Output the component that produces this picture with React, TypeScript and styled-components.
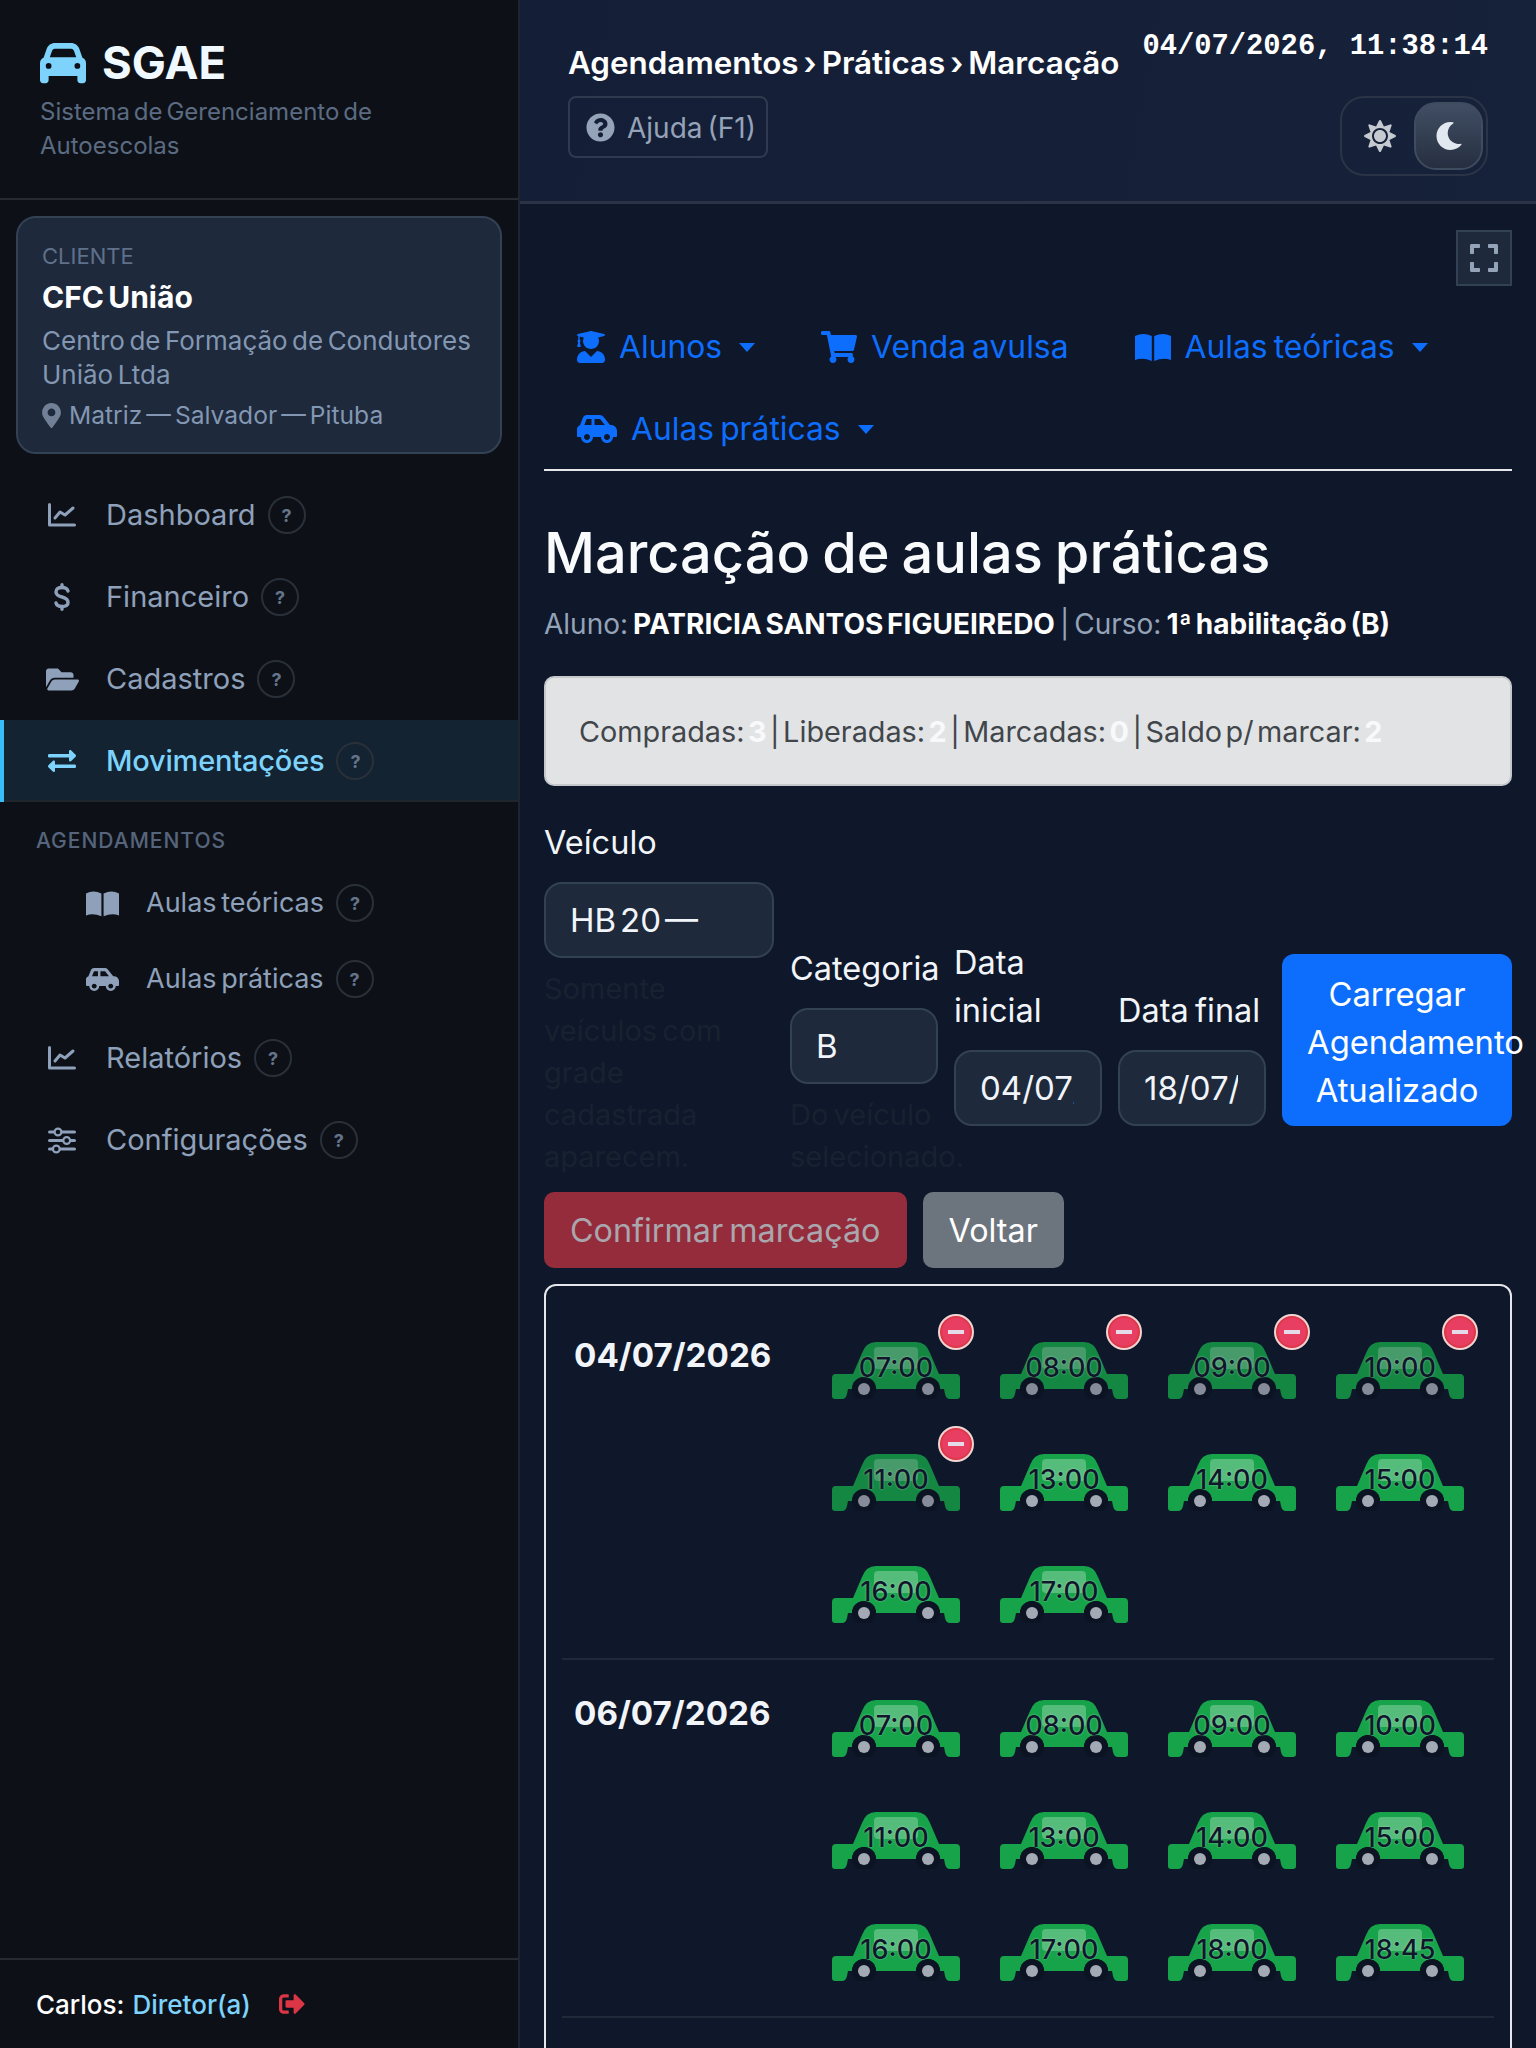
import { FC, ReactNode } from "react";
import styled, { createGlobalStyle } from "styled-components";
import {
  FaCarSide,
  FaExchangeAlt,
  FaExpand,
  FaFolderOpen,
  FaMapMarkerAlt,
  FaMoon,
  FaQuestionCircle,
  FaShoppingCart,
  FaSignOutAlt,
  FaSun,
  FaUserGraduate,
} from "react-icons/fa";
import { FaCar } from "react-icons/fa6";

const GlobalStyle = createGlobalStyle`
  html, body {
    margin: 0;
    height: 100%;
    overflow: hidden;
    background: #0f172a;
  }
  * { box-sizing: border-box; }
  body {
    font-family: Inter, "Open Sans", sans-serif;
    font-size: 28.8px;
    line-height: 1.5;
    word-spacing: -0.1em;
    color: #f1f5f9;
  }
`;

const Shell = styled.div`
  display: flex;
  height: 100vh;
  overflow: hidden;
`;

const Sidebar = styled.aside`
  width: 520px;
  flex: none;
  height: 100%;
  display: flex;
  flex-direction: column;
  background: #0d1117;
  border-right: 2px solid #1e2530;
`;

const Brand = styled.div`
  height: 200px;
  flex: none;
  padding: 36px 40px 0;
  border-bottom: 2px solid #262b33;
`;

const BrandTitle = styled.div`
  display: flex;
  align-items: center;
  gap: 16px;
  height: 54px;
  font-size: 45.5px;
  font-weight: 700;
  color: #f0f9ff;
  svg {
    color: #7dd3fc;
    font-size: 46px;
  }
`;

const BrandSub = styled.div`
  margin-top: 5px;
  font-size: 24px;
  line-height: 34px;
  color: #5b6b82;
`;

const ClientCard = styled.div`
  margin: 16px 16px 20px 16px;
  height: 238px;
  flex: none;
  padding: 23px 24px;
  background: #1e293b;
  border: 2px solid #334155;
  border-radius: 20px;
`;

const ClientLabel = styled.div`
  font-size: 22px;
  line-height: 30px;
  color: #5f708a;
`;

const ClientName = styled.div`
  margin-top: 6px;
  font-size: 30px;
  line-height: 40px;
  font-weight: 700;
  color: #ffffff;
`;

const ClientFull = styled.div`
  margin-top: 7px;
  font-size: 26px;
  line-height: 34px;
  color: #8397b2;
`;

const ClientPlace = styled.div`
  margin-top: 5px;
  display: flex;
  align-items: center;
  gap: 8px;
  font-size: 24.6px;
  line-height: 36px;
  color: #8397b2;
  svg {
    width: 19px;
    height: 25px;
    color: #718096;
  }
`;

const NavRow = styled.div<{ $active?: boolean; $sub?: boolean }>`
  flex: none;
  height: ${({ $sub }) => ($sub ? "76px" : "82px")};
  display: flex;
  align-items: center;
  padding-left: ${({ $sub }) => ($sub ? "82px" : "42px")};
  border-left: 4px solid ${({ $active }) => ($active ? "#38bdf8" : "transparent")};
  box-shadow: ${({ $active }) => ($active ? "inset 0 -2px 0 #20262e" : "none")};
  background: ${({ $active }) => ($active ? "#132331" : "transparent")};
  color: ${({ $active }) => ($active ? "#7dd3fc" : "#8ea0ba")};
  font-size: ${({ $sub }) => ($sub ? "27px" : "29px")};
  font-weight: ${({ $active }) => ($active ? 500 : 400)};
  letter-spacing: ${({ $active }) => ($active ? "-0.2px" : "0")};
`;

const NavIcon = styled.span<{ $wide?: boolean }>`
  width: 32px;
  margin-right: 28px;
  display: flex;
  justify-content: center;
  font-size: 28px;
  svg {
    flex: none;
    width: ${({ $wide }) => ($wide ? "33px" : "28px")};
    height: ${({ $wide }) => ($wide ? "33px" : "28px")};
  }
`;

const HelpDot = styled.span`
  margin-left: 12px;
  width: 38px;
  height: 38px;
  flex: none;
  display: flex;
  align-items: center;
  justify-content: center;
  border: 2px solid #2a303a;
  border-radius: 50%;
  font-size: 18px;
  font-weight: 700;
  color: #64748b;
`;

const SectionLabel = styled.div`
  flex: none;
  height: 63px;
  padding: 25px 0 0 36px;
  font-size: 21px;
  line-height: 28px;
  letter-spacing: 1px;
  font-weight: 500;
  color: #56657c;
`;

const SideFooter = styled.div`
  margin-top: auto;
  height: 90px;
  flex: none;
  display: flex;
  align-items: center;
  gap: 8px;
  padding: 0 0 0 36px;
  border-top: 2px solid #262b33;
  font-size: 26px;
  font-weight: 500;
  color: #ffffff;
`;

const RoleText = styled.span`
  color: #7dd3fc;
`;

const ExitIcon = styled.span`
  margin-left: 20px;
  display: flex;
  font-size: 26px;
  color: #dc3545;
`;

const Main = styled.main`
  flex: 1;
  min-width: 0;
  height: 100%;
  overflow: hidden;
`;

const Header = styled.header`
  height: 204px;
  display: flex;
  justify-content: space-between;
  padding: 40px 48px 0;
  background: linear-gradient(100deg, #141e36, #16213a);
  border-bottom: 3px solid #2a3446;
`;

const HeaderLeft = styled.div`
  display: flex;
  flex-direction: column;
  align-items: flex-start;
`;

const Breadcrumb = styled.div`
  font-size: 31.4px;
  line-height: 46px;
  font-weight: 600;
  color: #ffffff;
  white-space: nowrap;
`;

const HelpButton = styled.div`
  margin-top: 10px;
  height: 62px;
  width: 200px;
  display: flex;
  align-items: center;
  gap: 12px;
  padding: 2px 0 0 16px;
  border: 2px solid #2f3a4e;
  border-radius: 8px;
  font-size: 28px;
  color: #94a3b8;
  svg {
    font-size: 29px;
    margin-top: -2px;
  }
`;

const HeaderRight = styled.div`
  display: flex;
  flex-direction: column;
  align-items: flex-end;
  margin-top: -13px;
`;

const Clock = styled.div`
  font-family: "Liberation Mono", monospace;
  font-size: 28.8px;
  line-height: 40px;
  font-weight: 700;
  word-spacing: 0;
  color: #ffffff;
  white-space: nowrap;
`;

const ThemeToggle = styled.div`
  margin-top: 29px;
  width: 148px;
  height: 80px;
  display: flex;
  align-items: center;
  justify-content: space-between;
  padding: 0 3px 0 22px;
  border: 2px solid #2a3446;
  border-radius: 24px;
  font-size: 32px;
  color: #c5c9d0;
`;

const MoonPill = styled.div`
  width: 69px;
  height: 68px;
  display: flex;
  align-items: center;
  justify-content: center;
  border: 2px solid #3f4b5f;
  border-radius: 22px;
  background: linear-gradient(180deg, #414e63, #252f40);
  font-size: 28px;
  color: #e2e8f0;
`;

const Content = styled.div`
  padding: 26px 24px 0;
`;

const ToolRow = styled.div`
  display: flex;
  justify-content: flex-end;
`;

const ExpandButton = styled.div`
  width: 56px;
  height: 56px;
  display: flex;
  align-items: center;
  justify-content: center;
  background: #1e293b;
  border: 2px solid #334155;
  font-size: 32px;
  color: #94a3b8;
`;

const Tabs = styled.nav`
  margin-top: 19px;
  display: flex;
  flex-wrap: wrap;
  border-bottom: 2px solid #e5e7eb;
`;

const Tab = styled.div`
  height: 82px;
  display: flex;
  align-items: center;
  padding: 2px 33px 0 33px;
  font-size: 31.8px;
  color: #0d6efd;
  white-space: nowrap;
`;

const TabIcon = styled.span<{ $w: number; $h: number }>`
  display: flex;
  margin-right: 14px;
  svg {
    width: ${({ $w }) => $w}px;
    height: ${({ $h }) => $h}px;
  }
`;

const Caret = styled.span`
  margin-left: 17px;
  width: 0;
  height: 0;
  border-left: 8px solid transparent;
  border-right: 8px solid transparent;
  border-top: 9px solid #0d6efd;
`;

const Title = styled.h1`
  margin: 42px 0 0;
  font-size: 55.9px;
  line-height: 80px;
  font-weight: 500;
  color: #f8fafc;
`;

const StudentLine = styled.div`
  margin-top: 9px;
  font-size: 28px;
  line-height: 44px;
  color: #94a3b8;
  strong {
    color: #ffffff;
    font-weight: 700;
  }
`;

const Alert = styled.div`
  margin-top: 30px;
  height: 110px;
  display: flex;
  align-items: center;
  padding: 1px 0 0 33px;
  background: #e2e3e5;
  border: 2px solid #c4c8cb;
  border-radius: 10px;
  font-size: 28.8px;
  word-spacing: -0.16em;
  color: #41464b;
  b {
    color: #f8f9fa;
    font-weight: 700;
  }
`;

const FormRow = styled.div`
  margin-top: 32px;
  display: grid;
  grid-template-columns: 230px 148px 148px 148px 230px;
  column-gap: 16px;
  align-items: end;
`;

const Field = styled.div<{ $lift?: boolean }>`
  min-width: 0;
  padding-bottom: ${({ $lift }) => ($lift ? "52px" : "0")};
`;

const FieldLabel = styled.label`
  display: block;
  padding-top: 1px;
  margin-bottom: 15px;
  font-size: 32.5px;
  line-height: 48px;
  color: #f1f5f9;
`;

const TextBox = styled.input`
  display: block;
  width: 100%;
  height: 76px;
  padding: 0 26px 0 24px;
  background: #1e293b;
  border: 2px solid #334155;
  border-radius: 18px;
  outline: none;
  font-family: inherit;
  font-size: 33px;
  word-spacing: -0.16em;
  color: #f1f5f9;
`;

const HelpText = styled.div`
  margin-top: 10px;
  font-size: 29px;
  line-height: 42px;
  color: #192130;
  white-space: normal;
`;

const LoadButton = styled.div`
  margin-bottom: 52px;
  height: 172px;
  padding: 16px 25px;
  background: #0d6efd;
  border-radius: 12px;
  font-size: 32.8px;
  line-height: 48px;
  text-align: center;
  color: #ffffff;
`;

const ActionRow = styled.div`
  margin-top: 14px;
  display: flex;
  gap: 16px;
`;

const ActionButton = styled.div<{ $tone: "danger" | "neutral" }>`
  height: 76px;
  display: flex;
  align-items: center;
  padding: 2px 26px 0;
  border-radius: 10px;
  font-size: 32.3px;
  background: ${({ $tone }) => ($tone === "danger" ? "#952c3c" : "#6c757d")};
  color: ${({ $tone }) => ($tone === "danger" ? "#a9a7ad" : "#ffffff")};
`;

const ScheduleBox = styled.div`
  margin-top: 16px;
  padding: 16px 16px 80px;
  border: 2px solid #e5e7eb;
  border-radius: 12px;
`;

const DateRow = styled.div`
  display: grid;
  grid-template-columns: 270px 1fr;
  padding: 40px 0 35px;
  border-bottom: 2px solid #1f2937;
`;

const DateLabel = styled.div`
  margin-top: -12px;
  padding-left: 12px;
  font-size: 33.2px;
  line-height: 50px;
  font-weight: 700;
  color: #f1f5f9;
`;

const SlotGrid = styled.div`
  display: grid;
  grid-template-columns: repeat(4, 168px);
  grid-auto-rows: 57px;
  row-gap: 55px;
`;

const Slot = styled.div`
  position: relative;
  width: 128px;
  height: 57px;
`;

const CarDrawing = styled.svg<{ $blocked?: boolean }>`
  display: block;
  width: 128px;
  height: 57px;
  opacity: ${({ $blocked }) => ($blocked ? 0.8 : 1)};
`;

const SlotTime = styled.span`
  position: absolute;
  left: 0;
  right: 0;
  top: 9px;
  text-align: center;
  font-size: 27px;
  line-height: 34px;
  font-weight: 500;
  word-spacing: 0;
  color: #0f172a;
  text-shadow: 0 0 2px rgba(255, 255, 255, 0.5);
`;

const BlockedBadge = styled.span`
  position: absolute;
  left: 106px;
  top: -28px;
  width: 36px;
  height: 36px;
  border-radius: 50%;
  border: 2px solid #f1d5d5;
  background: radial-gradient(circle, #e83e62 0 58%, #d9323f 70%);
  &::after {
    content: "";
    position: absolute;
    left: 8px;
    right: 8px;
    top: 14px;
    height: 4px;
    background: #e5dbe8;
  }
`;

const BookIcon: FC = () => (
  <svg viewBox="0 0 36 28" fill="currentColor">
    <path d="M0 3Q8-1 16.8 3V28Q8 24 0 27Z" />
    <path d="M19.2 3Q28-1 36 3V27Q28 24 19.2 28Z" />
  </svg>
);

const ChartIcon: FC = () => (
  <svg viewBox="0 0 28 24" fill="none" stroke="currentColor" strokeWidth="3" strokeLinecap="round" strokeLinejoin="round">
    <path d="M1.5 1.5V22H26.5" />
    <path d="M7 15L12 9L17 12L25 5" />
  </svg>
);

const DollarIcon: FC = () => (
  <svg viewBox="0 0 16 28" fill="none" stroke="currentColor" strokeWidth="3.4" strokeLinecap="round">
    <path d="M14 8Q13 4.5 8 4.5Q2 4.5 2 9Q2 12.5 8 14Q14 15.5 14 19.5Q14 23.5 8 23.5Q3 23.5 2 20" />
    <path d="M8 1.8V4.5M8 23.5V26.2" />
  </svg>
);

const SlidersIcon: FC = () => (
  <svg viewBox="0 0 28 24" fill="none" stroke="currentColor" strokeLinecap="round">
    <path d="M1.5 4H26.5M1.5 12.5H26.5M1.5 21H26.5" strokeWidth="3" />
    <circle cx="10" cy="4" r="3.4" fill="#0d1117" strokeWidth="2.2" />
    <circle cx="18.7" cy="12.5" r="3.4" fill="#0d1117" strokeWidth="2.2" />
    <circle cx="8.3" cy="21" r="3.4" fill="#0d1117" strokeWidth="2.2" />
  </svg>
);

const CarShape: FC<{ blocked?: boolean }> = ({ blocked }) => (
  <CarDrawing $blocked={blocked} viewBox="0 0 128 57">
    <path
      fill="#16a34a"
      d="M0 36Q0 32 4 32H21L30 11Q34 0 44 0H84Q94 0 98 11L107 32H124Q128 32 128 36V54Q128 57 125 57H118Q114 57 113 52L112 47H108A12 12 0 0 0 84 47H44A12 12 0 0 0 20 47H16L15 52Q14 57 10 57H3Q0 57 0 54Z"
    />
    <rect x="42" y="5" width="44" height="22" rx="4" fill="#ffffff" fillOpacity="0.27" />
    <circle cx="32" cy="47" r="12" fill="#0c1322" />
    <circle cx="96" cy="47" r="12" fill="#0c1322" />
    <circle cx="32" cy="47" r="6" fill="#a3a9b5" />
    <circle cx="96" cy="47" r="6" fill="#a3a9b5" />
  </CarDrawing>
);

const SideItem: FC<{ icon: ReactNode; label: string; active?: boolean; sub?: boolean; wide?: boolean }> = ({
  icon,
  label,
  active,
  sub,
  wide,
}) => (
  <NavRow $active={active} $sub={sub}>
    <NavIcon $wide={wide}>{icon}</NavIcon>
    {label}
    <HelpDot>?</HelpDot>
  </NavRow>
);

const firstDay = ["07:00", "08:00", "09:00", "10:00", "11:00", "13:00", "14:00", "15:00", "16:00", "17:00"];
const blockedFirstDay = ["07:00", "08:00", "09:00", "10:00", "11:00"];
const secondDay = [
  "07:00", "08:00", "09:00", "10:00", "11:00", "13:00",
  "14:00", "15:00", "16:00", "17:00", "18:00", "18:45",
];

const App: FC = () => (
  <Shell>
    <GlobalStyle />
    <Sidebar>
      <Brand>
        <BrandTitle>
          <FaCar />
          SGAE
        </BrandTitle>
        <BrandSub>Sistema de Gerenciamento de Autoescolas</BrandSub>
      </Brand>
      <ClientCard>
        <ClientLabel>CLIENTE</ClientLabel>
        <ClientName>CFC União</ClientName>
        <ClientFull>Centro de Formação de Condutores União Ltda</ClientFull>
        <ClientPlace>
          <FaMapMarkerAlt />
          Matriz — Salvador — Pituba
        </ClientPlace>
      </ClientCard>
      <SideItem icon={<ChartIcon />} label="Dashboard" />
      <SideItem icon={<DollarIcon />} label="Financeiro" />
      <SideItem icon={<FaFolderOpen />} label="Cadastros" wide />
      <SideItem icon={<FaExchangeAlt />} label="Movimentações" active />
      <SectionLabel>AGENDAMENTOS</SectionLabel>
      <SideItem icon={<BookIcon />} label="Aulas teóricas" sub wide />
      <SideItem icon={<FaCarSide />} label="Aulas práticas" sub wide />
      <SideItem icon={<ChartIcon />} label="Relatórios" />
      <SideItem icon={<SlidersIcon />} label="Configurações" />
      <SideFooter>
        Carlos: <RoleText>Diretor(a)</RoleText>
        <ExitIcon>
          <FaSignOutAlt />
        </ExitIcon>
      </SideFooter>
    </Sidebar>
    <Main>
      <Header>
        <HeaderLeft>
          <Breadcrumb>Agendamentos › Práticas › Marcação</Breadcrumb>
          <HelpButton>
            <FaQuestionCircle />
            Ajuda (F1)
          </HelpButton>
        </HeaderLeft>
        <HeaderRight>
          <Clock>04/07/2026, 11:38:14</Clock>
          <ThemeToggle>
            <FaSun />
            <MoonPill>
              <FaMoon />
            </MoonPill>
          </ThemeToggle>
        </HeaderRight>
      </Header>
      <Content>
        <ToolRow>
          <ExpandButton>
            <FaExpand />
          </ExpandButton>
        </ToolRow>
        <Tabs>
          <Tab>
            <TabIcon $w={28} $h={32}>
              <FaUserGraduate />
            </TabIcon>
            Alunos
            <Caret />
          </Tab>
          <Tab>
            <TabIcon $w={36} $h={32}>
              <FaShoppingCart />
            </TabIcon>
            Venda avulsa
          </Tab>
          <Tab>
            <TabIcon $w={36} $h={28}>
              <BookIcon />
            </TabIcon>
            Aulas teóricas
            <Caret />
          </Tab>
          <Tab>
            <TabIcon $w={40} $h={32}>
              <FaCarSide />
            </TabIcon>
            Aulas práticas
            <Caret />
          </Tab>
        </Tabs>
        <Title>Marcação de aulas práticas</Title>
        <StudentLine>
          Aluno: <strong>PATRICIA SANTOS FIGUEIREDO</strong> | Curso: <strong>1ª habilitação (B)</strong>
        </StudentLine>
        <Alert>
          <span>
            Compradas: <b>3</b> | Liberadas: <b>2</b> | Marcadas: <b>0</b> | Saldo p/ marcar: <b>2</b>
          </span>
        </Alert>
        <FormRow>
          <Field>
            <FieldLabel>Veículo</FieldLabel>
            <TextBox readOnly value="HB 20 —" />
            <HelpText>Somente veículos com grade cadastrada aparecem.</HelpText>
          </Field>
          <Field>
            <FieldLabel>Categoria</FieldLabel>
            <TextBox readOnly value="B" />
            <HelpText>Do veículo selecionado.</HelpText>
          </Field>
          <Field $lift>
            <FieldLabel>Data inicial</FieldLabel>
            <TextBox readOnly value="04/07/2026" />
          </Field>
          <Field $lift>
            <FieldLabel>Data final</FieldLabel>
            <TextBox readOnly value="18/07/2026" />
          </Field>
          <LoadButton>Carregar Agendamento Atualizado</LoadButton>
        </FormRow>
        <ActionRow>
          <ActionButton $tone="danger">Confirmar marcação</ActionButton>
          <ActionButton $tone="neutral">Voltar</ActionButton>
        </ActionRow>
        <ScheduleBox>
          <DateRow>
            <DateLabel>04/07/2026</DateLabel>
            <SlotGrid>
              {firstDay.map((time) => {
                const blocked = blockedFirstDay.includes(time);
                return (
                  <Slot key={time}>
                    <CarShape blocked={blocked} />
                    <SlotTime>{time}</SlotTime>
                    {blocked && <BlockedBadge />}
                  </Slot>
                );
              })}
            </SlotGrid>
          </DateRow>
          <DateRow>
            <DateLabel>06/07/2026</DateLabel>
            <SlotGrid>
              {secondDay.map((time) => (
                <Slot key={time}>
                  <CarShape />
                  <SlotTime>{time}</SlotTime>
                </Slot>
              ))}
            </SlotGrid>
          </DateRow>
        </ScheduleBox>
      </Content>
    </Main>
  </Shell>
);

export default App;
